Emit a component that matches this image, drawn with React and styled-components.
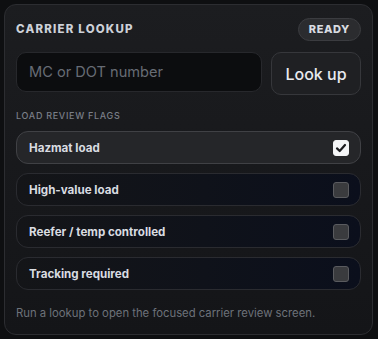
import styled, { createGlobalStyle } from 'styled-components'

const GlobalStyle = createGlobalStyle`
  html, body {
    margin: 0;
    background: #0e0f11;
  }
  body {
    font-family: Inter, "Noto Sans", sans-serif;
    -webkit-font-smoothing: antialiased;
  }
`

const Page = styled.div`
  padding: 4px 5px 4px 4px;
`

const Card = styled.section`
  box-sizing: border-box;
  width: 369px;
  height: 331px;
  border: 1px solid #2c2d31;
  border-radius: 12px;
  background: linear-gradient(180deg, #1c1d20 0%, #17181b 60%, #141518 100%);
  padding: 12px 11px 0 11px;
  display: flex;
  flex-direction: column;
`

const Header = styled.div`
  display: flex;
  align-items: center;
  justify-content: space-between;
  height: 24px;
`

const Title = styled.h2`
  margin: 0;
  font-size: 11.5px;
  font-weight: 800;
  letter-spacing: 1.2px;
  color: #cdd1d8;
`

const Badge = styled.span`
  box-sizing: border-box;
  height: 23px;
  padding: 0 10px;
  border-radius: 12px;
  border: 1px solid #3b3c40;
  background: #2b2c2f;
  color: #d9dce1;
  font-size: 11px;
  font-weight: 800;
  letter-spacing: 0.6px;
  display: flex;
  align-items: center;
`

const SearchRow = styled.div`
  display: flex;
  gap: 9px;
  margin-top: 11px;
  align-items: flex-start;
`

const Input = styled.input`
  box-sizing: border-box;
  flex: 1;
  min-width: 0;
  height: 40px;
  border-radius: 10px;
  border: 1px solid #27282c;
  background: #0c0d0f;
  padding: 0 12px;
  font-family: inherit;
  font-size: 14.6px;
  color: #e6e8ec;
  outline: none;
  &::placeholder {
    color: #676c75;
  }
`

const Button = styled.button`
  box-sizing: border-box;
  flex-shrink: 0;
  width: 90px;
  height: 43px;
  padding: 0;
  white-space: nowrap;
  border-radius: 10px;
  border: 1px solid #36373b;
  background: #1f2023;
  color: #e8eaee;
  font-family: inherit;
  font-size: 16px;
  font-weight: 500;
  cursor: pointer;
`

const SectionLabel = styled.div`
  margin-top: 15px;
  font-size: 9px;
  font-weight: 500;
  letter-spacing: 0.7px;
  color: #7a7f88;
`

const Flags = styled.div`
  display: flex;
  flex-direction: column;
  gap: 9px;
  margin-top: 10px;
`

const Flag = styled.label`
  box-sizing: border-box;
  height: 33px;
  border-radius: 12px;
  border: 1px solid ${p => (p.$on ? '#404145' : '#2a2b30')};
  background: ${p =>
    p.$on
      ? '#252629'
      : 'linear-gradient(90deg, #141518 0%, #0f121a 55%, #0b0f1c 100%)'};
  display: flex;
  align-items: center;
  justify-content: space-between;
  padding: 0 11px 0 12px;
  cursor: pointer;
`

const FlagText = styled.span`
  font-size: 11.6px;
  font-weight: 700;
  color: #d9dce1;
`

const Box = styled.span`
  box-sizing: border-box;
  width: 16px;
  height: 16px;
  border-radius: 3px;
  border: 1px solid ${p => (p.$on ? '#f2f3f5' : '#5a5b5f')};
  background: ${p => (p.$on ? '#f4f5f7' : '#3a3b3e')};
  display: flex;
  align-items: center;
  justify-content: center;
`

const Note = styled.p`
  margin: 16px 0 0 0;
  font-size: 11.3px;
  color: #6d727a;
`

const flags = [
  { label: 'Hazmat load', on: true },
  { label: 'High-value load', on: false },
  { label: 'Reefer / temp controlled', on: false },
  { label: 'Tracking required', on: false },
]

function App() {
  return (
    <Page>
      <GlobalStyle />
      <Card>
        <Header>
          <Title>CARRIER LOOKUP</Title>
          <Badge>READY</Badge>
        </Header>
        <SearchRow>
          <Input placeholder="MC or DOT number" />
          <Button>Look up</Button>
        </SearchRow>
        <SectionLabel>LOAD REVIEW FLAGS</SectionLabel>
        <Flags>
          {flags.map(f => (
            <Flag key={f.label} $on={f.on}>
              <FlagText>{f.label}</FlagText>
              <Box $on={f.on}>
                {f.on && (
                  <svg width="12" height="12" viewBox="0 0 12 12">
                    <path d="M2 6.4 L4.7 9 L10 3" fill="none" stroke="#1b1c1f" strokeWidth="2.2" strokeLinecap="round" strokeLinejoin="round" />
                  </svg>
                )}
              </Box>
            </Flag>
          ))}
        </Flags>
        <Note>Run a lookup to open the focused carrier review screen.</Note>
      </Card>
    </Page>
  )
}

export default App
